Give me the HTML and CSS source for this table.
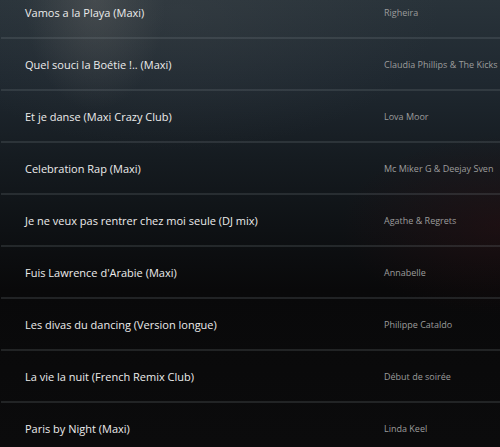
FILE: index.html
```html
<!DOCTYPE html>
<html lang="fr">
<head>
<meta charset="utf-8">
<link rel="stylesheet" href="styles.css">
</head>
<body>
<div class="page">
  <ul class="tracks">
    <li class="track"><span class="title">Vamos a la Playa (Maxi)</span><span class="artist">Righeira</span></li>
    <li class="track"><span class="title">Quel souci la Boétie !.. (Maxi)</span><span class="artist">Claudia Phillips &amp; The Kicks</span></li>
    <li class="track"><span class="title">Et je danse (Maxi Crazy Club)</span><span class="artist">Lova Moor</span></li>
    <li class="track"><span class="title">Celebration Rap (Maxi)</span><span class="artist">Mc Miker G &amp; Deejay Sven</span></li>
    <li class="track"><span class="title">Je ne veux pas rentrer chez moi seule (DJ mix)</span><span class="artist">Agathe &amp; Regrets</span></li>
    <li class="track"><span class="title">Fuis Lawrence d'Arabie (Maxi)</span><span class="artist">Annabelle</span></li>
    <li class="track"><span class="title">Les divas du dancing (Version longue)</span><span class="artist">Philippe Cataldo</span></li>
    <li class="track"><span class="title">La vie la nuit (French Remix Club)</span><span class="artist">Début de soirée</span></li>
    <li class="track"><span class="title">Paris by Night (Maxi)</span><span class="artist">Linda Keel</span></li>
  </ul>
</div>
</body>
</html>
```

FILE: styles.css
```css
html, body {
  margin: 0;
  padding: 0;
  height: 100%;
}
body {
  background-color: #0b0b0c;
  background-image:
    radial-gradient(ellipse 70px 110px at 95px 0px, rgba(110, 110, 108, 0.35), rgba(110, 110, 108, 0) 100%),
    radial-gradient(ellipse 260px 140px at 180px 10px, rgba(70, 76, 80, 0.3), rgba(70, 76, 80, 0) 100%),
    radial-gradient(ellipse 160px 90px at 500px 225px, rgba(45, 14, 16, 0.45), rgba(45, 14, 16, 0) 100%),
    linear-gradient(180deg, #29333a 0px, #1f2830 80px, #151b20 160px, #0e1114 230px, #09090a 290px, #0b0b0c 447px);
  font-family: "Open Sans", "Noto Sans", sans-serif;
  overflow: hidden;
}
.page {
  padding-left: 1px;
}
.tracks {
  list-style: none;
  margin: -13px 0 0 0;
  padding: 0;
}
.track {
  display: grid;
  grid-template-columns: 359px 1fr;
  align-items: center;
  height: 50px;
  padding-left: 24px;
  border-bottom: 2px solid rgba(130, 140, 145, 0.2);
}
.title {
  color: #ececec;
  font-size: 11px;
  white-space: nowrap;
}
.artist {
  color: #9c9c9c;
  font-size: 9px;
  white-space: nowrap;
}
```
